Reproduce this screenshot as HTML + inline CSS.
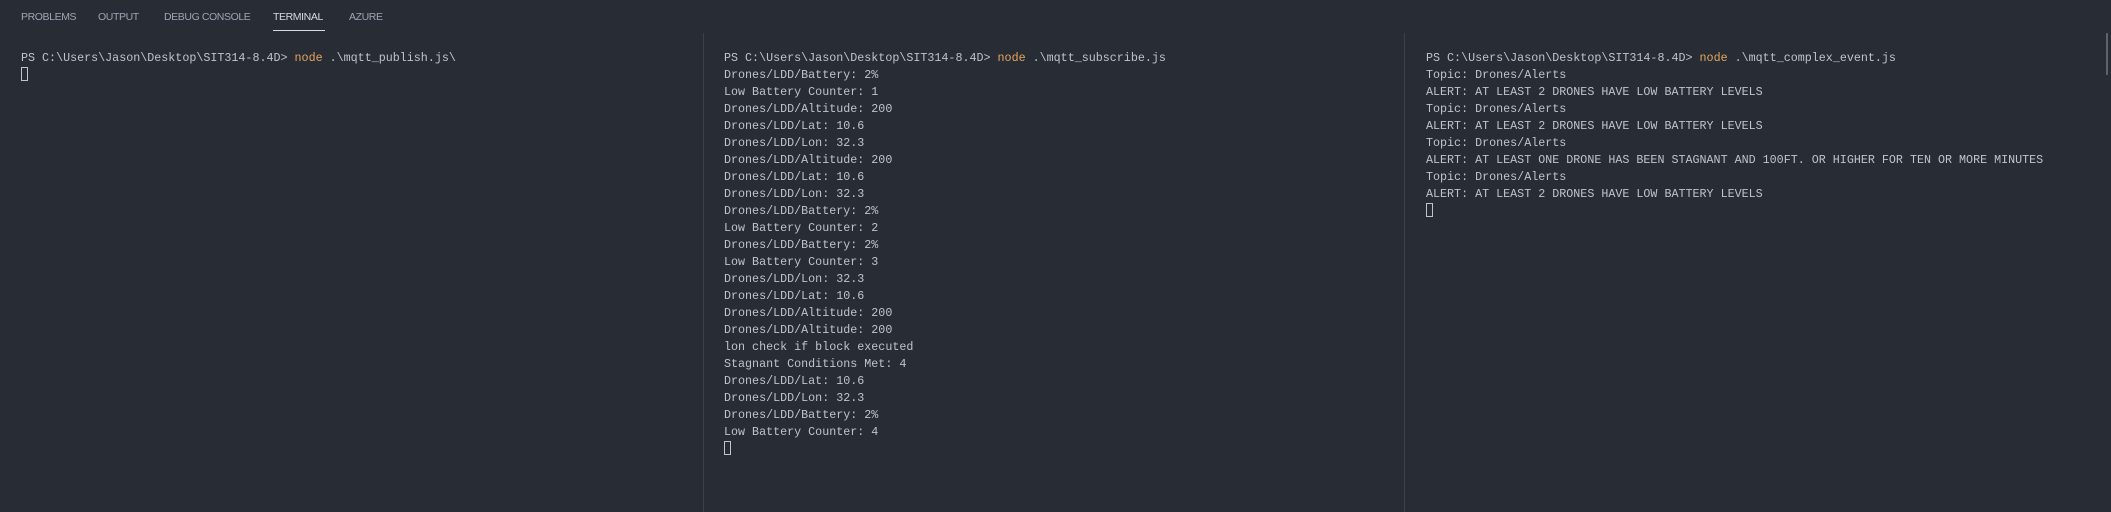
<!DOCTYPE html>
<html><head><meta charset="utf-8"><style>
html,body{margin:0;padding:0;width:2111px;height:512px;background:#282c34;overflow:hidden;position:relative}
.tab{position:absolute;top:11px;font:10.5px "Liberation Sans",sans-serif;color:#9da5b4;letter-spacing:-0.4px}
.tab.a{color:#d7dae0}
.ul{position:absolute;left:273px;top:30px;width:52px;height:1px;background:#d7dae0}
.sep{position:absolute;top:33px;width:1px;height:479px;background:#3b404b}
.pane{position:absolute;top:50px;font:11.7px/17px "Liberation Mono",monospace;color:#bfc4cc;white-space:pre}
.o{color:#e5a55f}
.cur{display:inline-block;width:7px;height:14px;border:1px solid #bfc4cc;box-sizing:border-box;vertical-align:-3px}
.sb{position:absolute;left:2106px;top:33px;width:2px;height:42px;background:#5c6370}
</style></head><body>
<div class="tab" style="left:21px">PROBLEMS</div>
<div class="tab" style="left:98px">OUTPUT</div>
<div class="tab" style="left:164px">DEBUG CONSOLE</div>
<div class="tab a" style="left:273px">TERMINAL</div>
<div class="tab" style="left:349px">AZURE</div>
<div class="ul"></div>
<div class="sep" style="left:703px"></div>
<div class="sep" style="left:1404px"></div>
<div class="sb"></div>
<div class="pane" style="left:21px">PS C:\Users\Jason\Desktop\SIT314-8.4D&gt; <span class="o">node</span> .\mqtt_publish.js\
<span class="cur"></span></div>
<div class="pane" style="left:724px">PS C:\Users\Jason\Desktop\SIT314-8.4D&gt; <span class="o">node</span> .\mqtt_subscribe.js
Drones/LDD/Battery: 2%
Low Battery Counter: 1
Drones/LDD/Altitude: 200
Drones/LDD/Lat: 10.6
Drones/LDD/Lon: 32.3
Drones/LDD/Altitude: 200
Drones/LDD/Lat: 10.6
Drones/LDD/Lon: 32.3
Drones/LDD/Battery: 2%
Low Battery Counter: 2
Drones/LDD/Battery: 2%
Low Battery Counter: 3
Drones/LDD/Lon: 32.3
Drones/LDD/Lat: 10.6
Drones/LDD/Altitude: 200
Drones/LDD/Altitude: 200
lon check if block executed
Stagnant Conditions Met: 4
Drones/LDD/Lat: 10.6
Drones/LDD/Lon: 32.3
Drones/LDD/Battery: 2%
Low Battery Counter: 4
<span class="cur"></span></div>
<div class="pane" style="left:1426px">PS C:\Users\Jason\Desktop\SIT314-8.4D&gt; <span class="o">node</span> .\mqtt_complex_event.js
Topic: Drones/Alerts
ALERT: AT LEAST 2 DRONES HAVE LOW BATTERY LEVELS
Topic: Drones/Alerts
ALERT: AT LEAST 2 DRONES HAVE LOW BATTERY LEVELS
Topic: Drones/Alerts
ALERT: AT LEAST ONE DRONE HAS BEEN STAGNANT AND 100FT. OR HIGHER FOR TEN OR MORE MINUTES
Topic: Drones/Alerts
ALERT: AT LEAST 2 DRONES HAVE LOW BATTERY LEVELS
<span class="cur"></span></div>
</body></html>
